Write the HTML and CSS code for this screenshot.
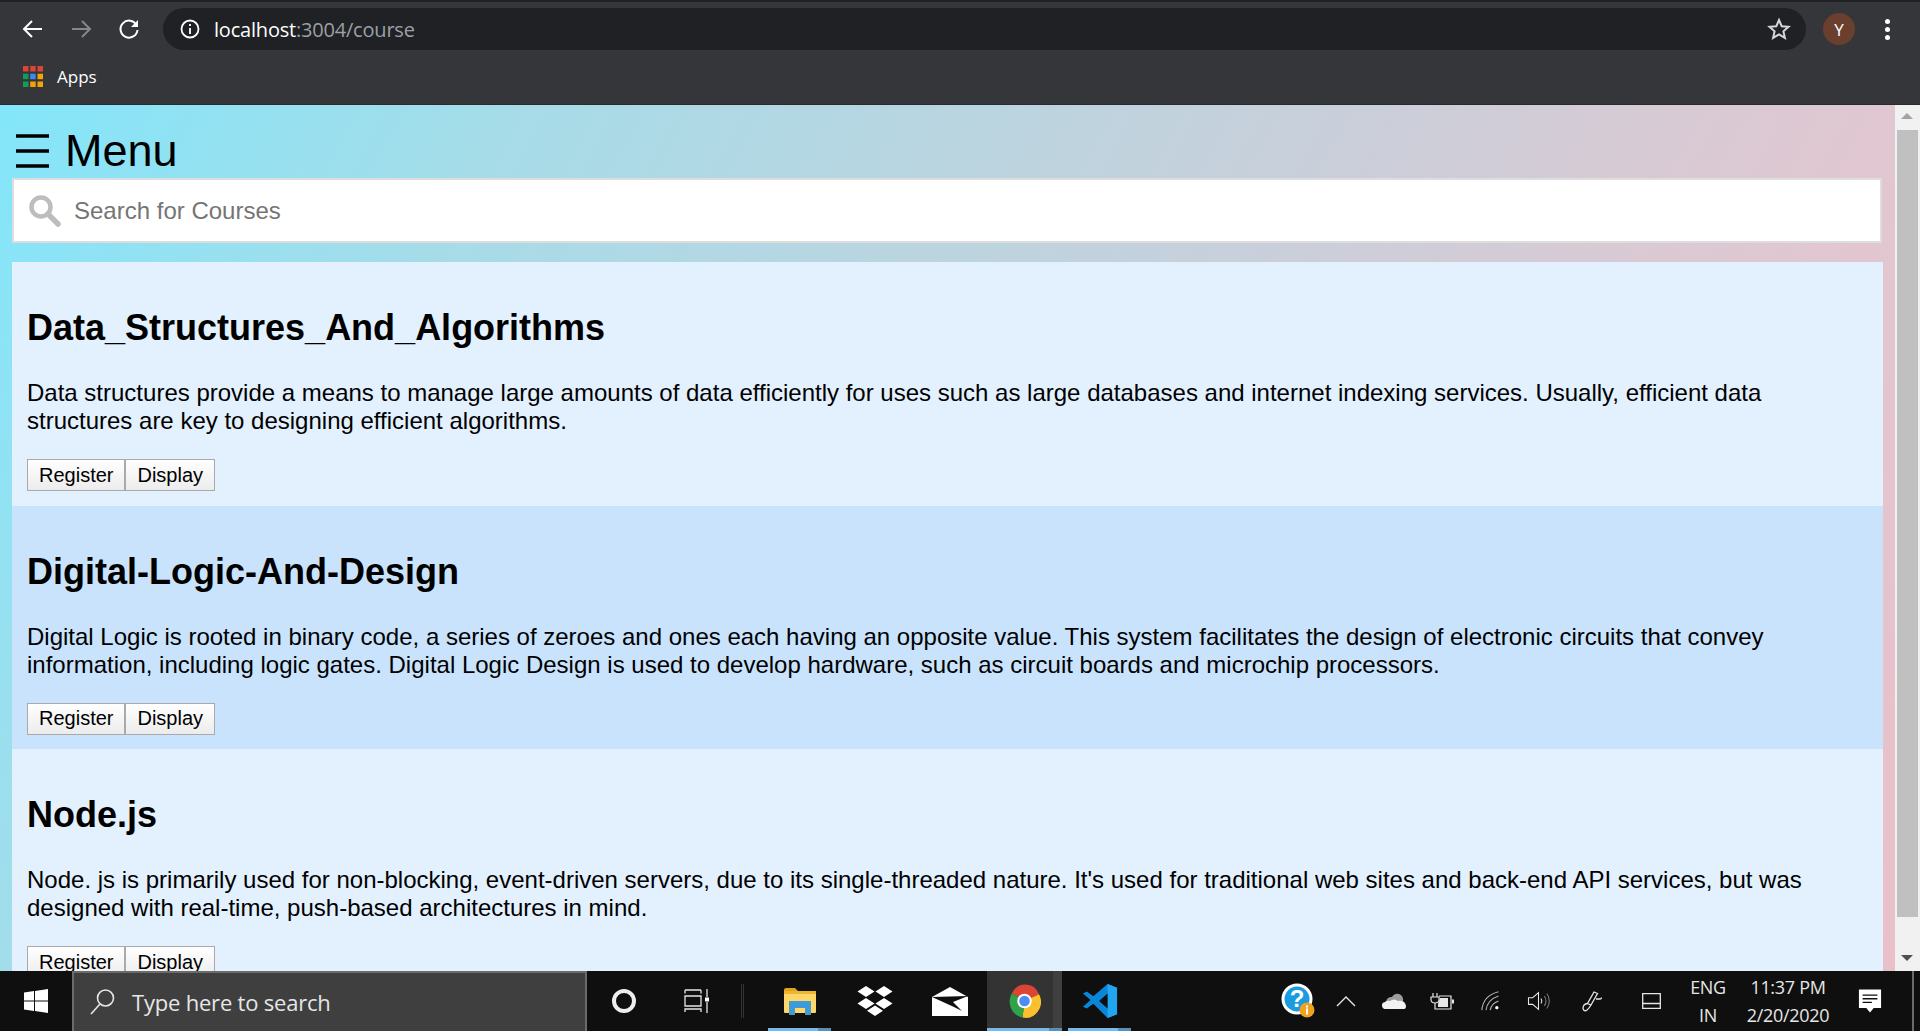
FILE: index.html
```html
<!DOCTYPE html>
<html lang="en">
<head>
    <meta charset="UTF-8">
    <title>Courses</title>
    <link rel="stylesheet" href="styles.css">
</head>
<body>
    <!-- browser toolbar -->
    <header class="chrome">
        <div class="tabstrip"></div>
        <div class="toolbar">
            <svg class="tool-icon" width="24" height="24" viewBox="0 0 24 24"><path d="M21 12H4M11 4l-8 8 8 8" fill="none" stroke="#fff" stroke-width="2"/></svg>
            <svg class="tool-icon" width="24" height="24" viewBox="0 0 24 24"><path d="M3 12h17M13 4l8 8-8 8" fill="none" stroke="#85878a" stroke-width="2"/></svg>
            <svg class="tool-icon" width="24" height="24" viewBox="0 0 24 24"><path d="M19.500 8A8.500 8.500 0 1 0 20.500 13" fill="none" stroke="#fff" stroke-width="2"/><path d="M21 3v7h-7z" fill="#fff"/></svg>
            <div class="omnibox">
                <svg width="22" height="22" viewBox="0 0 22 22"><circle cx="11" cy="11" r="8.500" fill="none" stroke="#fff" stroke-width="1.800"/><path d="M11 10v6M11 6v2" stroke="#fff" stroke-width="1.800"/></svg>
                <span class="url">localhost<span class="url-dim">:3004/course</span></span>
                <svg class="star" width="24" height="24" viewBox="0 0 24 24"><path d="M12 3l2.700 6.200 6.800.6-5.100 4.500 1.500 6.600-5.900-3.500-5.900 3.500 1.500-6.600L2.500 9.800l6.800-.6z" fill="none" stroke="#d5d7da" stroke-width="2"/></svg>
            </div>
            <div class="avatar">Y</div>
            <div class="dots"><i></i><i></i><i></i></div>
        </div>
        <div class="bookmarks">
            <svg width="20" height="21" viewBox="0 0 20 21">
                <g fill="#db4437"><rect x="0" y="0" width="5.500" height="5.500"/><rect x="7.200" y="0" width="5.500" height="5.500"/><rect x="14.500" y="0" width="5.500" height="5.500"/></g>
                <rect x="0" y="7.700" width="5.500" height="5.500" fill="#0f9d58"/><rect x="7.200" y="7.700" width="5.500" height="5.500" fill="#4285f4"/><rect x="14.500" y="7.700" width="5.500" height="5.500" fill="#f4a400"/>
                <rect x="0" y="15.500" width="5.500" height="5.500" fill="#0f9d58"/><rect x="7.200" y="15.500" width="5.500" height="5.500" fill="#f4a400"/><rect x="14.500" y="15.500" width="5.500" height="5.500" fill="#f4a400"/>
            </svg>
            <span>Apps</span>
        </div>
    </header>

    <div class="viewport">
        <main class="page">
            <div class="menu">
                <svg width="33" height="34" viewBox="0 0 33 34"><path d="M0 2h33M0 17h33M0 32h33" stroke="#000" stroke-width="3.500"/></svg>
                <span>Menu</span>
            </div>
            <div class="search">
                <svg width="34" height="34" viewBox="0 0 34 34"><circle cx="13" cy="13" r="9.500" fill="none" stroke="#bdbdbd" stroke-width="4.500"/><path d="M20 20l10 10" stroke="#bdbdbd" stroke-width="5.500" stroke-linecap="round"/></svg>
                <span>Search for Courses</span>
            </div>
            <section class="course">
                <h2>Data_Structures_And_Algorithms</h2>
                <p>Data structures provide a means to manage large amounts of data efficiently for uses such as large databases and internet indexing services. Usually, efficient data structures are key to designing efficient algorithms.</p>
                <div class="btns"><button>Register</button><button>Display</button></div>
            </section>
            <section class="course alt">
                <h2>Digital-Logic-And-Design</h2>
                <p>Digital Logic is rooted in binary code, a series of zeroes and ones each having an opposite value. This system facilitates the design of electronic circuits that convey information, including logic gates. Digital Logic Design is used to develop hardware, such as circuit boards and microchip processors.</p>
                <div class="btns"><button>Register</button><button>Display</button></div>
            </section>
            <section class="course">
                <h2>Node.js</h2>
                <p>Node. js is primarily used for non-blocking, event-driven servers, due to its single-threaded nature. It's used for traditional web sites and back-end API services, but was designed with real-time, push-based architectures in mind.</p>
                <div class="btns"><button>Register</button><button>Display</button></div>
            </section>
        </main>
        <div class="scrollbar">
            <div class="arrow up"></div>
            <div class="thumb"></div>
            <div class="arrow down"></div>
        </div>
    </div>

    <!-- windows taskbar -->
    <footer class="taskbar">
        <div class="start">
            <svg width="24" height="24" viewBox="0 0 24 24"><path d="M0 3.500l10-1.400v9.300H0zM11 2l13-2v11.400H11zM0 12.600h10v9.300L0 20.500zM11 12.600h13V24l-13-2z" fill="#fff"/></svg>
        </div>
        <div class="taskbar-search">
            <svg width="26" height="28" viewBox="0 0 26 28"><circle cx="15.500" cy="10" r="8" fill="none" stroke="#e6e6e6" stroke-width="1.600"/><path d="M10 16L1 26" stroke="#e6e6e6" stroke-width="1.600"/></svg>
            <span>Type here to search</span>
        </div>
        <div class="cortana"></div>
        <div class="task-btn">
            <svg width="26" height="24" viewBox="0 0 26 24" fill="none" stroke="#e6e6e6" stroke-width="1.300"><path d="M1 4.500V1M17 4.500V1M1 1h16M1 7h16v10H1zM1 23v-3h16v3M23 0v8M23 13v11"/><rect x="21" y="8.500" width="4" height="4" fill="#fff" stroke="none"/></svg>
        </div>
        <div class="task-sep"></div>
        <div class="apps">
            <div class="app running">
                <svg width="32" height="27" viewBox="0 0 32 27"><path d="M0 2q0-2 2-2h9l3 3H0z" fill="#e0a41c"/><path d="M0 3h32v6H0z" fill="#eeb436"/><path d="M0 6h32v18q0 1-1 1H1q-1 0-1-1z" fill="#ffd766"/><path d="M5 13h22v14h-6v-7H11v7H5z" fill="#3f9bd8"/></svg>
            </div>
            <div class="app">
                <svg width="36" height="30" viewBox="0 0 36 30" fill="#fff"><path d="M9 0l8.500 5.500L9 11 .5 5.500zM27 0l8.500 5.500L27 11l-8.500-5.500zM9 12l8.500 5.500L9 23 .5 17.500zM27 12l8.500 5.500L27 23l-8.500-5.500zM18 19.500l8 5.250L18 30l-8-5.250z"/></svg>
            </div>
            <div class="app">
                <svg width="36" height="29" viewBox="0 0 36 29"><path d="M0 10L18 0l18 10v19H0z" fill="#fff"/><path d="M0 10L36 9 21 15l9 9-8-4z" fill="#0f0f0f"/></svg>
            </div>
            <div class="app active running">
                <svg width="33" height="34" viewBox="0 0 34 34">
                    <path d="M17 17L4 9A15.500 16.500 0 0 1 32 10z" fill="#dc4436"/>
                    <path d="M17 17L32 10A15.500 16.500 0 0 1 15 34z" fill="#fbc02d"/>
                    <path d="M17 17L15 34A15.500 16.500 0 0 1 4 9z" fill="#2fa24a"/>
                    <circle cx="17" cy="17" r="7.500" fill="#fff"/><circle cx="17" cy="17" r="5.500" fill="#4d8cf5"/>
                </svg>
            </div>
            <div class="app running">
                <svg width="36" height="36" viewBox="0 0 38 38"><path d="M27 1l10 4v28l-10 4-15-15-7 5-4-2 8-7-8-7 4-2 7 5z" fill="#0a86d8"/><path d="M27 1l10 4v28l-10 4z" fill="#22a5f1"/><path d="M27 11v16l-9-8z" fill="#0f0f0f"/></svg>
            </div>
        </div>
        <div class="tray">
            <svg width="36" height="36" viewBox="0 0 36 36"><circle cx="17" cy="16" r="14" fill="#1b9be0" stroke="#fff" stroke-width="3"/><text x="17" y="24" text-anchor="middle" font-family="Liberation Sans" font-weight="bold" font-size="24" fill="#fff">?</text><circle cx="27" cy="27" r="7.500" fill="#f0a11f"/><rect x="26" y="25.500" width="2" height="6" fill="#fff"/><rect x="26" y="22.500" width="2" height="2" fill="#fff"/></svg>
            <svg width="20" height="12" viewBox="0 0 20 12"><path d="M1 11l9-9 9 9" fill="none" stroke="#e6e6e6" stroke-width="1.400"/></svg>
            <svg width="24" height="16" viewBox="0 0 24 16"><path d="M4 9a6 6 0 0 1 6-5 7 7 0 0 1 7-3 6 6 0 0 1 4 7z" fill="#9d9d9d"/><path d="M4 16a3.500 3.500 0 0 1-1-7q2-2 5-1 4-3 8 0 7-1 8 5 0 3-2 3z" fill="#f2f2f2"/></svg>
            <svg width="24" height="17" viewBox="0 0 24 17" fill="none" stroke="#e6e6e6" stroke-width="1.200"><path d="M3 0v4M7 0v4M1 4h8v3q-.5 3-4 3-3.500 0-4-3zM5 10v6h16V3H9"/><path d="M22 6.500h2v4h-2z" fill="#e6e6e6" stroke="none"/><path d="M10 5h8v9H8v-3z" fill="#e6e6e6" stroke="none"/></svg>
            <svg width="20" height="20" viewBox="0 0 24 24" fill="none" stroke="#b4b4b4" stroke-width="1.300"><path d="M1 23C2 12 9 4 21 1M6 23C7 15 12 9 21 6M11 23c1-5 4-9 10-11"/><circle cx="19" cy="20" r="2" fill="#fff" stroke="none"/></svg>
            <svg width="23" height="20" viewBox="0 0 26 24" fill="none" stroke="#e6e6e6" stroke-width="1.300"><path d="M1 8h5l7-6v20l-7-6H1z"/><path d="M16 9q2 3 0 6"/><path d="M20 6q4 6 0 12M23 3q6 9 0 18" stroke="#777"/></svg>
            <svg width="20" height="21" viewBox="0 0 20 21" fill="none" stroke="#e6e6e6" stroke-width="1.300"><path d="M12 1l3.500 1.500L9 14l-3.500-1.500zM5.500 12.500Q1 13 1 17.500 2 21 5 19q2-1.500 4-5M14 8h4q1.500 0 1.500-1.500"/></svg>
            <svg width="19" height="16" viewBox="0 0 19 16" fill="none" stroke="#e6e6e6" stroke-width="1.300"><path d="M.7.700h17.600v14.600H.7zM.7 10.500h17.600"/></svg>
            <div class="lang"><span>ENG</span><span>IN</span></div>
            <div class="clock"><span>11:37 PM</span><span>2/20/2020</span></div>
            <svg width="24" height="25" viewBox="0 0 26 26"><path d="M1 0h24v20h-8l-4 5-4-5H1z" fill="#fff"/><path d="M5 6h16M5 10h16M5 14h10" stroke="#0f0f0f" stroke-width="1.400"/></svg>
            <div class="show-desktop"></div>
        </div>
    </footer>
</body>
</html>
```

FILE: styles.css
```css
* {
  margin: 0;
  padding: 0;
  box-sizing: border-box;
}

body {
  display: flex;
  flex-direction: column;
  height: 100vh;
  overflow: hidden;
  font-family: "Liberation Sans", Arial, sans-serif;
  background: #0f0f0f;
}

/* browser toolbar */
.chrome {
  height: 105px;
  flex-shrink: 0;
  background-color: #35363a;
  border-bottom: 1px solid #2a2b2e;
}

.tabstrip {
  height: 2px;
  background-color: #202124;
}

.toolbar {
  display: flex;
  align-items: center;
  height: 50px;
  padding: 4px 0 0 21px;
}

.tool-icon {
  flex-shrink: 0;
  margin-right: 24px;
}

.tool-icon:nth-child(3) {
  margin-right: 22px;
}

.omnibox {
  display: flex;
  align-items: center;
  flex-shrink: 0;
  width: 1643px;
  height: 42px;
  padding: 0 15px 0 16px;
  border-radius: 21px;
  background-color: #202124;
}

.url {
  margin-left: 13px;
  font-family: "Open Sans", sans-serif;
  font-size: 20px;
  letter-spacing: -0.2px;
  color: #fff;
}

.url-dim {
  color: #9aa0a6;
}

.star {
  margin-left: auto;
}

.avatar {
  display: flex;
  align-items: center;
  justify-content: center;
  flex-shrink: 0;
  width: 32px;
  height: 32px;
  margin-left: 17px;
  border-radius: 50%;
  background-color: #6a3f2e;
  color: #fff;
  font-family: "Open Sans", sans-serif;
  font-size: 17px;
}

.dots {
  display: flex;
  flex-direction: column;
  gap: 3px;
  margin-left: 30px;
}

.dots i {
  display: block;
  width: 5px;
  height: 5px;
  border-radius: 50%;
  background-color: #fff;
}

.bookmarks {
  display: flex;
  align-items: center;
  gap: 14px;
  height: 48px;
  padding-left: 23px;
  font-family: "Open Sans", sans-serif;
  font-size: 17px;
  color: #fff;
}

/* page area */
.viewport {
  display: flex;
  flex: 1;
  min-height: 0;
}

.page {
  flex: 1;
  min-width: 0;
  padding: 0 12px;
  overflow: hidden;
  background: linear-gradient(118deg, #83e6fa 0%, #a6dce8 22%, #e0c7d1 80%, #e9c0c9 100%);
}

.menu {
  display: flex;
  align-items: center;
  gap: 16px;
  height: 73px;
  padding: 18px 0 0 4px;
  font-size: 45px;
  line-height: 51px;
}

.search {
  display: flex;
  align-items: center;
  height: 65px;
  padding: 1px 0 0 14px;
  margin: 0 1px 19px 0;
  background-color: #fff;
  border: 2px solid #ddd;
  font-size: 24px;
  color: #757575;
}

.search svg {
  margin-right: 12px;
}

.course {
  height: 243.6px;
  padding: 45px 15px 0;
  background-color: #e3f0fe;
}

.course.alt {
  background-color: #c9e3fd;
}

.course h2 {
  font-size: 36px;
  line-height: 42px;
  margin-bottom: 30px;
}

.course p {
  font-size: 24px;
  line-height: 28px;
  margin-bottom: 24px;
}

.btns {
  display: flex;
}

button {
  height: 32px;
  padding: 0 11px;
  font-family: "Liberation Sans", Arial, sans-serif;
  font-size: 20px;
  color: #000;
  background: linear-gradient(#fff, #ececec);
  border: 1px solid #aaa;
  border-radius: 0;
}

.scrollbar {
  display: flex;
  flex-direction: column;
  width: 25px;
  flex-shrink: 0;
  background-color: #f1f1f1;
}

.arrow {
  height: 25px;
  flex-shrink: 0;
  position: relative;
}

.arrow::after {
  content: "";
  position: absolute;
  left: 6px;
  border-left: 6px solid transparent;
  border-right: 6px solid transparent;
}

.arrow.up::after {
  top: 8px;
  border-bottom: 6px solid #a3a3a3;
}

.arrow.down::after {
  top: 9px;
  border-top: 6px solid #505050;
}

.thumb {
  height: 787px;
  margin: 0 2px 29px;
  background-color: #c0c0c0;
}

/* windows taskbar */
.taskbar {
  display: flex;
  align-items: center;
  height: 60px;
  flex-shrink: 0;
  background-color: #0f0f0f;
  color: #e6e6e6;
}

.start {
  display: flex;
  justify-content: center;
  width: 72px;
}

.taskbar-search {
  display: flex;
  align-items: center;
  gap: 16px;
  width: 515px;
  height: 60px;
  padding-left: 16px;
  background-color: #3f3f3f;
  border: 2px solid #6b6b6b;
  border-bottom: 0;
  font-family: "Open Sans", sans-serif;
  font-size: 22px;
  letter-spacing: -0.2px;
}

.cortana {
  width: 24px;
  height: 24px;
  margin-left: 25px;
  border: 4px solid #eee;
  border-radius: 50%;
}

.task-btn {
  margin-left: 48px;
  height: 24px;
}

.task-sep {
  width: 3px;
  height: 34px;
  margin-left: 31px;
  border-left: 1px solid #333;
  border-right: 1px solid #333;
}

.apps {
  display: flex;
  margin-left: 18px;
}

.app {
  display: flex;
  align-items: center;
  justify-content: center;
  position: relative;
  width: 75px;
  height: 60px;
}

.app.active {
  background: linear-gradient(to right, #333 66px, #3f3f3f 66px);
}

.app.running::after {
  content: "";
  position: absolute;
  left: 6px;
  right: 6px;
  bottom: 0;
  height: 3px;
  background: linear-gradient(to left, #5b8fb9 13px, #76b9ed 13px);
}

.app.active.running::after {
  left: 0;
  right: 0;
}

/* one slot per tray item, the icons are not evenly spaced */
.tray {
  display: grid;
  grid-template-columns: 48px 48px 48px 48px 49px 46px 62px 56px 58px 102px 62px 13px;
  justify-items: center;
  align-items: center;
  margin-left: auto;
  padding-right: 6px;
}

.lang,
.clock {
  display: flex;
  flex-direction: column;
  align-items: center;
  gap: 6px;
  font-family: "Open Sans", sans-serif;
  font-size: 18px;
  line-height: 22px;
  letter-spacing: -0.3px;
  white-space: nowrap;
}

.show-desktop {
  justify-self: end;
  width: 2px;
  height: 60px;
  background-color: #6b6b6b;
}
```
